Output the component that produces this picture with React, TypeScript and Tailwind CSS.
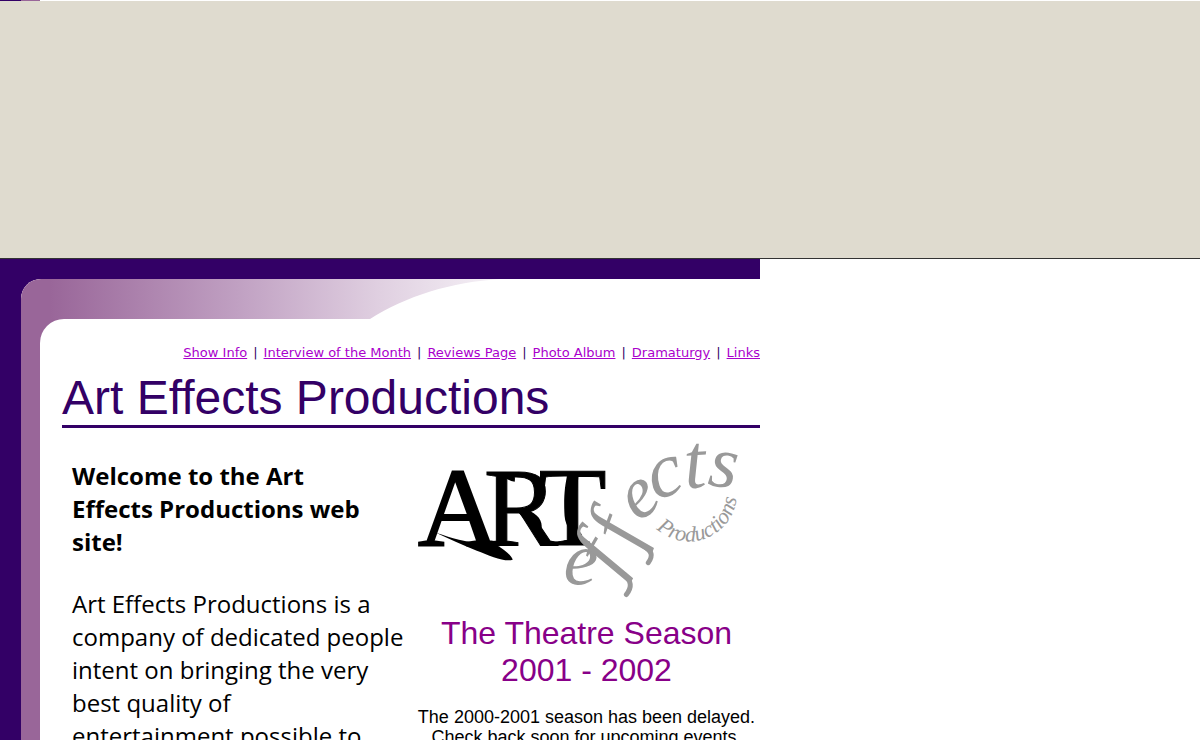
const navLinks = [
  'Show Info',
  'Interview of the Month',
  'Reviews Page',
  'Photo Album',
  'Dramaturgy',
  'Links',
];

const effectsLetters = [
  { char: 'e', x: 579, y: 585, angle: 4, size: 76 },
  { char: 'f', x: 620, y: 567, angle: -60, size: 80 },
  { char: 'f', x: 639, y: 539, angle: -70, size: 80 },
  { char: 'e', x: 651, y: 513, angle: -38, size: 74 },
  { char: 'c', x: 671, y: 495, angle: -18, size: 78 },
  { char: 't', x: 696, y: 488, angle: -4, size: 78 },
  { char: 's', x: 721, y: 487, angle: 8, size: 74 },
];

function HeaderSwoosh() {
  return (
    <svg className="block" width="480" height="40" viewBox="0 0 480 40" aria-hidden="true">
      <defs>
        <linearGradient id="fade" x1="0" x2="1" y1="0" y2="0">
          <stop offset="0.06" stopColor="#996699" />
          <stop offset="0.45" stopColor="#c0a0c2" />
          <stop offset="0.75" stopColor="#e0d0e1" />
          <stop offset="1" stopColor="#f6f2f7" />
        </linearGradient>
      </defs>
      <rect width="480" height="40" fill="url(#fade)" />
      <path d="M480 0C430 3 385 17 349 40H480Z" fill="#fff" />
    </svg>
  );
}

function Logo() {
  return (
    <svg
      className="mx-auto block w-full max-w-[340px] overflow-visible font-['Liberation_Serif',serif]"
      viewBox="412 435 340 170"
      role="img"
      aria-label="Art Effects Productions logo"
    >
      <g fill="#000" stroke="#000">
        <text x="417" y="546" fontSize="113" strokeWidth="2">A</text>
        <text x="483" y="545" fontSize="112" strokeWidth="1">R</text>
        <text x="538" y="545" fontSize="112" strokeWidth="1">T</text>
        <path
          d="M435 533C450 538 466 543 482 544L495 545C504 550 511 556 512 560C505 563 489 556 476 551C461 545 448 539 435 533Z"
          strokeWidth="0"
        />
        <path
          d="M499 473C502 475 505 477 508 475C513 472 515 475 514 482C508 481 504 478 499 473Z"
          strokeWidth="0"
        />
        <path
          d="M520 508C535 512 542 519 541 528C540 533 537 537 538 539C545 538 552 544 561 542C568 538 575 542 578 536L583 545H540C534 534 527 522 516 511Z"
          strokeWidth="0"
        />
        <path
          d="M567 475H578C576 495 575 515 577 532C582 532 583 537 580 545H572C576 535 565 530 564 516C563 500 564 485 567 475Z"
          strokeWidth="0"
        />
      </g>
      <g fill="#999" fontStyle="italic" textAnchor="middle">
        {effectsLetters.map((l, i) => (
          <text key={i} x={l.x} y={l.y} fontSize={l.size} transform={`rotate(${l.angle} ${l.x} ${l.y})`}>
            {l.char}
          </text>
        ))}
      </g>
      <g fill="none" stroke="#999" strokeWidth="5" strokeLinecap="round">
        <path d="M624 575C631 582 632 587 626 595" />
        <path d="M643 546C652 552 653 556 648 563" />
      </g>
      <path id="arc" d="M656 529A48 48 0 0 0 736 486" fill="none" />
      <text fill="#999" fontSize="22" fontStyle="italic">
        <textPath href="#arc">Productions</textPath>
      </text>
    </svg>
  );
}

export default function App() {
  return (
    <div className="min-h-screen bg-white text-black">
      <div className="flex h-px">
        <div className="w-[21px] bg-[#330066]" />
        <div className="w-[19px] bg-[#996699]" />
      </div>
      <div className="h-[258px] border-b border-[#333333] bg-[#dfdbcf]" />

      <div className="w-full max-w-[760px] bg-[#330066] pt-5 pl-[21px]">
        <div className="overflow-hidden rounded-tl-[20px] bg-[#996699]">
          <div className="bg-white">
            <HeaderSwoosh />
          </div>
          <div className="ml-[19px] rounded-tl-[24px] bg-white pt-6 pl-[22px]">
            <nav className="flex justify-end gap-1.5 font-[Verdana,'DejaVu_Sans',sans-serif] text-[13px] leading-5 text-[#330066]">
              {navLinks.map((label, i) => (
                <span key={label} className="flex gap-1.5">
                  {i > 0 && <span>|</span>}
                  <a href="#" className="text-[#aa00cc] underline">
                    {label}
                  </a>
                </span>
              ))}
            </nav>
            <h1 className="mt-2 border-b-3 border-[#330066] font-['Liberation_Sans',Arial,sans-serif] text-[48px] leading-[54px] text-[#330066]">
              Art Effects Productions
            </h1>

            <div className="flex">
              <section className="w-[351px] shrink-0 pt-[31px] pl-2.5 font-['Comic_Sans_MS','Open_Sans',sans-serif] text-[24px] leading-[33px] whitespace-nowrap">
                <p className="font-bold">
                  Welcome to the Art
                  <br />
                  Effects Productions web
                  <br />
                  site!
                </p>
                <p className="mt-[29px]">
                  Art Effects Productions is a
                  <br />
                  company of dedicated people
                  <br />
                  intent on bringing the very
                  <br />
                  best quality of
                  <br />
                  entertainment possible to
                </p>
              </section>
              <section className="min-w-0 flex-1 pt-[7px] text-center font-['Liberation_Sans',Arial,sans-serif]">
                <div className="pr-2">
                  <Logo />
                </div>
                <h2 className="mt-2.5 text-[32px] leading-[37px] text-[#880088]">
                  The Theatre Season
                  <br />
                  2001 - 2002
                </h2>
                <p className="mt-[18px] text-[18px] leading-5">
                  The 2000-2001 season has been delayed.
                  <br />
                  Check back soon for upcoming events.
                </p>
              </section>
            </div>
          </div>
        </div>
      </div>
    </div>
  );
}
